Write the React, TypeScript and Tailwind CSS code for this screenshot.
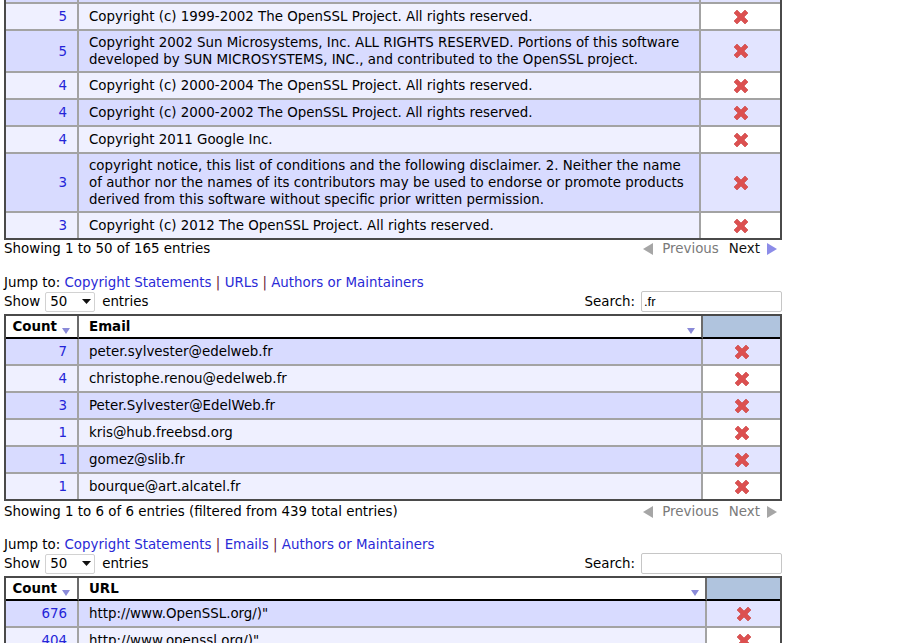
import React from 'react';

type Row = { count: string; text: React.ReactNode };

const XIcon = () => (
  <svg width="16" height="16" viewBox="0 0 16 16" className="inline-block">
    <polygon
      points="1,4 4,1 8,5 12,1 15,4 11,8 15,12 12,15 8,11 4,15 1,12 5,8"
      fill="#dc5050"
      stroke="#c94141"
      strokeWidth="0.6"
      strokeLinejoin="round"
    />
  </svg>
);

const SortArrow = () => (
  <svg width="8" height="6" viewBox="0 0 8 6" className="inline-block">
    <polygon points="0,0 8,0 4,6" fill="#8a8ad8" />
  </svg>
);

const Pager = ({ nextEnabled }: { nextEnabled: boolean }) => (
  <div className="flex items-center pr-[5px]">
    <svg width="10" height="12" viewBox="0 0 10 12">
      <polygon points="10,0 10,12 0,6" fill="#a6a6a6" />
    </svg>
    <span className="ml-[9px] text-[#7a7a7a]">Previous</span>
    <span className={nextEnabled ? 'ml-[10px] text-[#111111]' : 'ml-[10px] text-[#7a7a7a]'}>Next</span>
    <svg width="10" height="12" viewBox="0 0 10 12" className="ml-[7px]">
      <polygon points="0,0 0,12 10,6" fill={nextEnabled ? '#8c8ce8' : '#a6a6a6'} />
    </svg>
  </div>
);

function bg(odd: boolean, x: boolean) {
  if (x) return odd ? 'bg-[#e2e4ff]' : 'bg-white';
  return odd ? 'bg-[#d8dbff]' : 'bg-[#eff0ff]';
}

function BodyRows({ rows, firstOdd }: { rows: Row[]; firstOdd: boolean }) {
  return (
    <>
      {rows.map((r, i) => {
        const odd = i % 2 === 0 ? firstOdd : !firstOdd;
        const last = i === rows.length - 1;
        const b = last ? '' : 'border-b-2';
        return (
          <tr key={i}>
            <td className={`${bg(odd, false)} ${b} border-r-2 border-[#a3a3a3] py-[3px] pr-[10px] text-right align-middle text-[#2424d8]`}>
              {r.count}
            </td>
            <td className={`${bg(odd, false)} ${b} border-r-2 border-[#a3a3a3] py-[3px] px-[10px] align-middle whitespace-nowrap`}>
              {r.text}
            </td>
            <td className={`${bg(odd, true)} ${b} border-[#a3a3a3] py-[3px] text-center align-middle`}>
              <div className="flex justify-center items-center h-[19px]">
                <XIcon />
              </div>
            </td>
          </tr>
        );
      })}
    </>
  );
}

function Header({ label }: { label: string }) {
  return (
    <thead>
      <tr>
        <th className="bg-white border-r-2 border-b-2 border-r-[#6b6b6b] border-b-black py-[2px] font-bold">
          <div className="flex justify-end items-end pr-[7px] h-[17px]">
            <span>Count</span>
            <span className="ml-[5px] mb-[1px] flex"><SortArrow /></span>
          </div>
        </th>
        <th className="bg-white border-r-2 border-b-2 border-r-[#6b6b6b] border-b-black py-[2px] font-bold text-left">
          <div className="flex justify-between items-end pl-[10px] pr-[6px] h-[17px]">
            <span>{label}</span>
            <span className="mb-[1px] flex"><SortArrow /></span>
          </div>
        </th>
        <th className="bg-[#b0c4de] border-b-2 border-b-black py-[2px]"></th>
      </tr>
    </thead>
  );
}

const Links = ({ a, b, c }: { a: string; b: string; c: string }) => (
  <div className="h-[17px] flex items-center">
    <span>Jump to:&nbsp;</span>
    <span className="text-[#2a2ad6]">{a}</span>
    <span className="text-[#6a1a3a]">&nbsp;|&nbsp;</span>
    <span className="text-[#2a2ad6]">{b}</span>
    <span className="text-[#6a1a3a]">&nbsp;|&nbsp;</span>
    <span className="text-[#2a2ad6]">{c}</span>
  </div>
);

const ShowRow = ({ search }: { search: string }) => (
  <div className="h-[21px] mb-[2px] flex items-center justify-between">
    <div className="flex items-center">
      <span>Show</span>
      <div className="ml-[5px] mr-[7px] w-[50px] h-[20px] border border-[#d2d2d2] rounded-[2px] flex items-center justify-between pl-[4px] pr-[3px] bg-white">
        <span>50</span>
        <svg width="9" height="5" viewBox="0 0 9 5">
          <polygon points="0,0 9,0 4.5,5" fill="#111" />
        </svg>
      </div>
      <span>entries</span>
    </div>
    <div className="flex items-center">
      <span>Search:</span>
      <div className="ml-[6px] w-[141px] h-[21px] border border-[#c6c6c6] rounded-[2px] bg-white flex items-center pl-[2px] font-['Liberation_Sans',sans-serif] text-[13px]">
        {search}
      </div>
    </div>
  </div>
);

const topRows: Row[] = [
  { count: '5', text: 'Copyright (c) 1999-2002 The OpenSSL Project. All rights reserved.' },
  {
    count: '5',
    text: (
      <>
        Copyright 2002 Sun Microsystems, Inc. ALL RIGHTS RESERVED. Portions of this software
        <br />
        developed by SUN MICROSYSTEMS, INC., and contributed to the OpenSSL project.
      </>
    ),
  },
  { count: '4', text: 'Copyright (c) 2000-2004 The OpenSSL Project. All rights reserved.' },
  { count: '4', text: 'Copyright (c) 2000-2002 The OpenSSL Project. All rights reserved.' },
  { count: '4', text: 'Copyright 2011 Google Inc.' },
  {
    count: '3',
    text: (
      <>
        copyright notice, this list of conditions and the following disclaimer. 2. Neither the name
        <br />
        of author nor the names of its contributors may be used to endorse or promote products
        <br />
        derived from this software without specific prior written permission.
      </>
    ),
  },
  { count: '3', text: 'Copyright (c) 2012 The OpenSSL Project. All rights reserved.' },
];

const emailRows: Row[] = [
  { count: '7', text: 'peter.sylvester@edelweb.fr' },
  { count: '4', text: 'christophe.renou@edelweb.fr' },
  { count: '3', text: 'Peter.Sylvester@EdelWeb.fr' },
  { count: '1', text: 'kris@hub.freebsd.org' },
  { count: '1', text: 'gomez@slib.fr' },
  { count: '1', text: 'bourque@art.alcatel.fr' },
];

const urlRows: Row[] = [
  { count: '676', text: 'http://www.OpenSSL.org/)"' },
  { count: '404', text: 'http://www.openssl.org/)"' },
];

export default function App() {
  return (
    <div className="h-[643px] w-[898px] bg-white pl-[4px] font-['DejaVu_Sans',Verdana,sans-serif] text-[13.4px] leading-[17px] text-black overflow-hidden">
      <div className="w-[778px]">
        {/* Top table (scrolled) */}
        <div className="border-l-2 border-r-2 border-b-2 border-[#4a4a4a] overflow-hidden">
          <table className="w-full table-fixed border-separate border-spacing-0 -mt-[23px]">
            <colgroup>
              <col className="w-[73px]" />
              <col />
              <col className="w-[79px]" />
            </colgroup>
            <tbody>
              <BodyRows firstOdd={true} rows={[{ count: '', text: '' }, ...topRows]} />
            </tbody>
          </table>
        </div>
        <div className="h-[17px] flex items-center justify-between">
          <span>Showing 1 to 50 of 165 entries</span>
          <Pager nextEnabled={true} />
        </div>
        <div className="h-[17px]" />
        <Links a="Copyright Statements" b="URLs" c="Authors or Maintainers" />
        <ShowRow search=".fr" />

        {/* Email table */}
        <div className="border-2 border-[#4a4a4a]">
          <table className="w-full table-fixed border-separate border-spacing-0">
            <colgroup>
              <col className="w-[73px]" />
              <col />
              <col className="w-[77px]" />
            </colgroup>
            <Header label="Email" />
            <tbody>
              <BodyRows firstOdd={true} rows={emailRows} />
            </tbody>
          </table>
        </div>
        <div className="h-[19px] pt-[2px] flex items-center justify-between">
          <span>Showing 1 to 6 of 6 entries (filtered from 439 total entries)</span>
          <Pager nextEnabled={false} />
        </div>
        <div className="h-[16px]" />
        <Links a="Copyright Statements" b="Emails" c="Authors or Maintainers" />
        <ShowRow search="" />

        {/* URL table */}
        <div className="border-2 border-[#4a4a4a]">
          <table className="w-full table-fixed border-separate border-spacing-0">
            <colgroup>
              <col className="w-[73px]" />
              <col />
              <col className="w-[73px]" />
            </colgroup>
            <Header label="URL" />
            <tbody>
              <BodyRows firstOdd={true} rows={urlRows} />
            </tbody>
          </table>
        </div>
      </div>
    </div>
  );
}
